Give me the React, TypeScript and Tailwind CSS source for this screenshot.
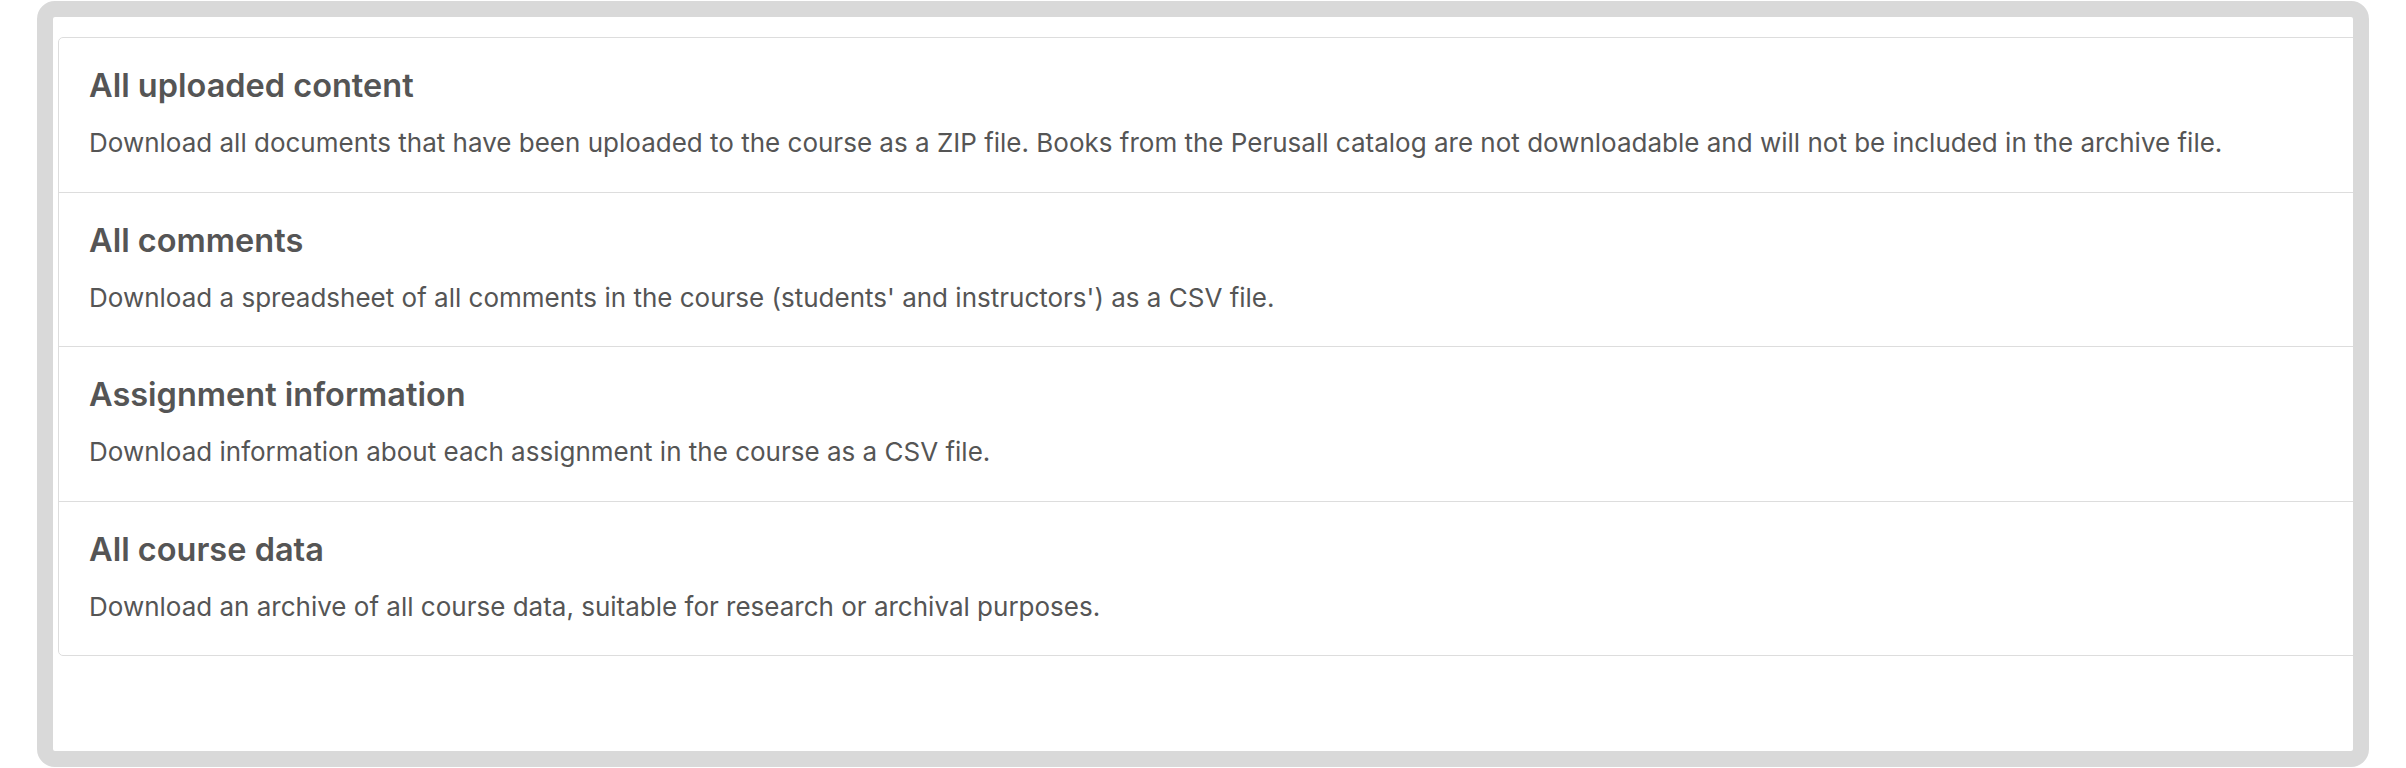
import React from "react";

const rows = [
  {
    title: "All uploaded content",
    desc: "Download all documents that have been uploaded to the course as a ZIP file. Books from the Perusall catalog are not downloadable and will not be included in the archive file.",
  },
  {
    title: "All comments",
    desc: "Download a spreadsheet of all comments in the course (students' and instructors') as a CSV file.",
  },
  {
    title: "Assignment information",
    desc: "Download information about each assignment in the course as a CSV file.",
  },
  {
    title: "All course data",
    desc: "Download an archive of all course data, suitable for research or archival purposes.",
  },
];

export default function App() {
  return (
    <div
      className="w-[2406px] h-[768px] bg-white pt-[1px]"
      style={{ fontFamily: "Inter, 'Noto Sans', sans-serif" }}
    >
      <div className="mx-[37px] h-[766px] rounded-[18px] border-[16px] border-[#d9d9d9] bg-white overflow-hidden">
        <div className="h-full overflow-hidden pt-[20px] pl-[5px]">
          <div className="-mr-[12px] rounded-[5px] border border-[#dddddd] bg-white">
            {rows.map((r, i) => (
              <div
                key={r.title}
                className={
                  "pl-[30px] pt-[29px] pb-[29.5px] " +
                  (i > 0 ? "border-t border-[#dddddd]" : "")
                }
              >
                <div className="text-[32.5px] leading-[38px] font-semibold text-[#555555]">
                  {r.title}
                </div>
                <div className="mt-[19px] text-[26px] leading-[38px] text-[#555555]">
                  {r.desc}
                </div>
              </div>
            ))}
          </div>
        </div>
      </div>
    </div>
  );
}
